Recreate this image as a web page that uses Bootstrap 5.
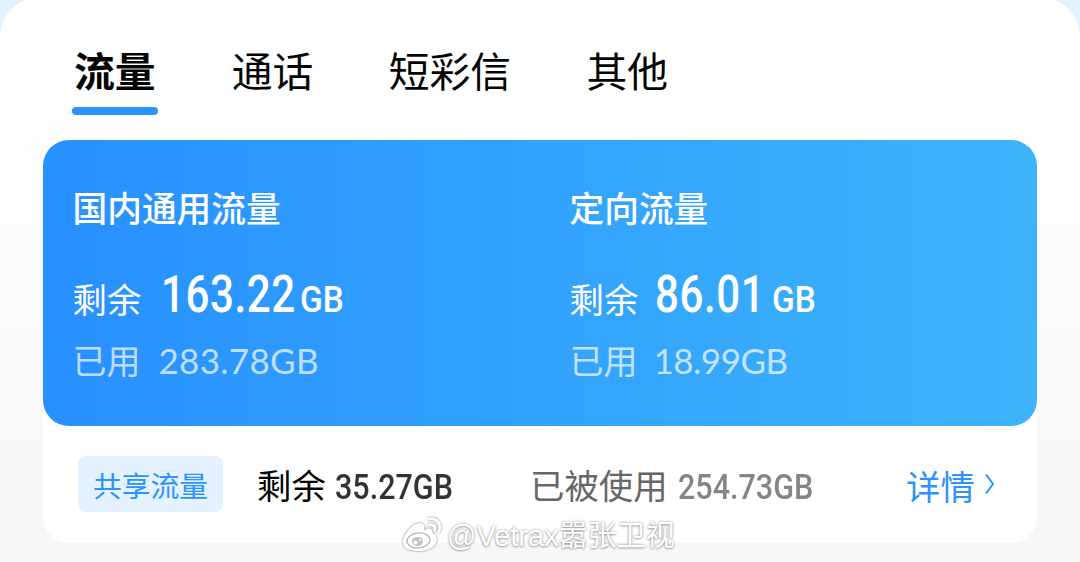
<!DOCTYPE html>
<html lang="zh-CN">
<head>
<meta charset="utf-8">
<meta name="viewport" content="width=device-width, initial-scale=1">
<title>流量</title>
<link href="https://cdn.jsdelivr.net/npm/bootstrap@5.3.0/dist/css/bootstrap.min.css" rel="stylesheet">
<style>
body{height:562px;overflow:hidden;background:linear-gradient(#e2f2ff 0,#e2f2ff 60px,#fff 61px,#fff 110px,#f7f7f7 490px,#f7f7f7 562px);font-family:"Noto Sans CJK SC",sans-serif;color:#050505}
.sheet{height:565px;margin-top:-3px;padding:45px 43px 0;border-radius:40px 40px 0 0;background:linear-gradient(#fff 0,#fff 113px,#f7f7f7 493px)}
.tabs{height:98px;padding-left:31px;gap:75.3px}
.tabs a{display:block;font-size:40.8px;line-height:56px;height:73px;color:#050505;text-decoration:none;white-space:nowrap}
.tabs a.active{font-weight:700;width:82.5px}
.tabs a.active::after{content:"";display:block;width:86px;height:8px;margin:9px -2px 0;border-radius:4px;background:#2b92ff}
.usage{height:403px;border-radius:26px;background:#fff}
.quota{height:286px;border-radius:26px;background:linear-gradient(90deg,#2890ff,#3db4fa);color:#fff}
.quota .cell{width:497px;padding:44px 0 0 29.5px}
.cell h2{font-size:34.7px;line-height:46px;font-weight:500;margin:0}
.line1{height:64px;margin-top:34px;font-size:34.4px;line-height:64px}
.line2{height:46px;margin-top:9px;font-size:34px;line-height:46px;color:rgba(255,255,255,.7)}
.num{display:inline-block;font-family:Roboto,sans-serif;transform-origin:0 50%;white-space:nowrap}
.big{font-size:52px;font-weight:500;transform:translateY(-1px) scaleX(.81);letter-spacing:.7px}
.unit{font-size:37px;font-weight:500;transform:translateY(-1px) scaleX(.9)}
.used{font-family:Lato,sans-serif;font-size:35px;letter-spacing:.3px}
.slot{flex:none;white-space:nowrap}
.shared{height:117px;padding-left:35px;font-size:34.4px}
.tag{width:145px;height:56px;margin-top:-1px;border-radius:8px;background:#e4f2ff;color:#2b93ff;font-size:28.8px;line-height:57px;text-align:center}
.mid{font-size:35px;font-weight:500;transform:scaleX(.872)}
.pair{position:relative;top:2px}
.more{color:#2b93ff;text-decoration:none}
.wm{position:absolute;left:402px;top:514px;height:44px;color:#fff;font:29px/46px "Liberation Sans","Noto Sans CJK SC",sans-serif;text-shadow:0 0 3px rgba(0,0,0,.4),0 1px 2px rgba(0,0,0,.22)}
.wm svg{filter:drop-shadow(0 0 1.2px rgba(0,0,0,.5))}
</style>
</head>
<body>
<main class="sheet">
  <nav class="tabs d-flex">
    <a class="active" href="#">流量</a><a href="#">通话</a><a href="#">短彩信</a><a href="#">其他</a>
  </nav>
  <section class="usage">
    <div class="quota d-flex">
      <div class="cell">
        <h2>国内通用流量</h2>
        <div class="line1 d-flex align-items-baseline"><span class="slot" style="width:88px">剩余</span><span class="slot" style="width:139px"><span class="num big">163.22</span></span><span class="num unit">GB</span></div>
        <div class="line2 d-flex align-items-baseline"><span class="slot" style="width:86px">已用</span><span class="num used">283.78GB</span></div>
      </div>
      <div class="cell">
        <h2>定向流量</h2>
        <div class="line1 d-flex align-items-baseline"><span class="slot" style="width:85px">剩余</span><span class="slot" style="width:117px"><span class="num big">86.01</span></span><span class="num unit">GB</span></div>
        <div class="line2 d-flex align-items-baseline"><span class="slot" style="width:84px">已用</span><span class="num used" style="letter-spacing:-.5px">18.99GB</span></div>
      </div>
    </div>
    <div class="shared d-flex align-items-center">
      <span class="tag slot">共享流量</span>
      <div class="pair d-flex align-items-baseline slot" style="margin-left:34px;width:273px"><span class="slot" style="width:78px">剩余</span><span class="num mid" style="color:#333">35.27GB</span></div>
      <div class="pair d-flex align-items-baseline slot" style="width:376px;color:#666"><span class="slot" style="width:148px">已被使用</span><span class="num mid" style="color:#858585">254.73GB</span></div>
      <a class="more d-flex align-items-center" href="#"><span style="padding-top:2px">详情</span><svg class="ms-2" width="14" height="22" viewBox="0 0 14 22" fill="none" stroke="#2b93ff" stroke-width="2"><path d="M3 1.5 10 11 3 20.5"/></svg></a>
    </div>
  </section>
</main>
<div class="wm d-flex align-items-center">
  <svg width="42" height="40" viewBox="0 0 42 40" fill="none"><path fill="#fff" d="M18 7c-6-1-17 11-17 19 0 7 8 9 16 9 11 0 18-5 18-12 0-3-2-5-4-5 0-6-4-6-9-4 1-4 0-7-4-7Z"/><ellipse cx="16.500" cy="24.500" rx="11.500" ry="7.500" stroke="#bbb" stroke-width="1.3" transform="rotate(-6 16 25)"/><ellipse cx="15.500" cy="25.500" rx="5.500" ry="4.500" fill="#c4c4c4"/><circle cx="13.500" cy="26.500" r="2" fill="#fff"/><circle cx="17.800" cy="24" r="1" fill="#fff"/><path stroke="#fff" stroke-width="2.8" stroke-linecap="round" d="M27 3c7-2 13 5 10 12M27 9c4-1 7 2 5.500 5"/></svg><span style="margin-left:3px">@Vetrax嚣张卫视</span>
</div>
<script src="https://cdn.jsdelivr.net/npm/bootstrap@5.3.0/dist/js/bootstrap.bundle.min.js"></script>
</body>
</html>
